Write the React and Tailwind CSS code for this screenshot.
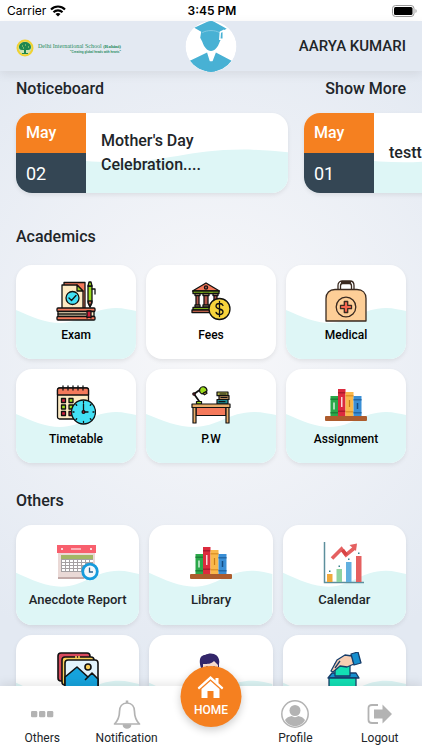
import React from 'react';

const Wave = () => (
  <svg
    className="absolute inset-0 w-full h-full"
    viewBox="0 0 120 94"
    preserveAspectRatio="none"
    aria-hidden="true"
  >
    <path d="M0 45C16 52 30 58 44 58C66 58 76 43 100 43C108 43 114 45 120 46V94H0Z" fill="#def6f6" />
  </svg>
);

const ExamIcon = () => (
  <svg viewBox="0 0 40 40" className="w-10 h-10" stroke="#111" strokeWidth="1.3" strokeLinejoin="round" strokeLinecap="round">
    <path d="M8 1.5h21v26H8z" fill="#f4795b" />
    <path d="M6 4h15l6 6v18H6z" fill="#fdeac3" />
    <path d="M21 4l6 6h-6z" fill="#9bcf2b" />
    <path d="M32 5h4v17l-2 4-2-4z" fill="#9bdc1c" />
    <path d="M32 5l1-4h2l1 4z" fill="#9bdc1c" />
    <path d="M36 8h3v5" fill="none" />
    <path d="M32 20h4l-2 6z" fill="#f4795b" />
    <circle cx="16.5" cy="17" r="6.500" fill="#42e0f5" />
    <path d="M13 17l2.500 2.500 4.500-5" fill="none" />
    <rect x="1" y="27" width="38" height="3.500" rx="1" fill="#f4795b" />
    <path d="M2 30.500h36v5H2z" fill="#fdeac3" />
    <rect x="1" y="35.500" width="38" height="3.500" rx="1" fill="#f4795b" />
    <path d="M2 33h28" />
    <path d="M31 30h4v7l-2-1-2 1z" fill="#d11f3d" />
  </svg>
);

const FeesIcon = () => (
  <svg viewBox="0 0 40 40" className="w-10 h-10" stroke="#111" strokeWidth="1.3" strokeLinejoin="round" strokeLinecap="round">
    <path d="M1.500 10L15 2l13.500 8z" fill="#f4795b" />
    <circle cx="15" cy="6.500" r="1.600" fill="#b5564a" />
    <path d="M2 10h26v2.500H2z" fill="#9bdc1c" />
    <path d="M5 14h3v12H5zM13 14h4v12h-4zM23 14h3v12h-3z" fill="#b5564a" />
    <path d="M4 12.500h5v2H4zM12 12.500h6v2h-6zM22 12.500h5v2h-5zM4 24h5v2H4zM12 24h6v2h-6z" fill="#fdd79a" />
    <path d="M2 26.500h20v2.500H2z" fill="#9bdc1c" />
    <path d="M1 29h22v2.500H1z" fill="#f4795b" />
    <circle cx="28.500" cy="28" r="10.500" fill="#f8d43c" />
    <path d="M32 24.500c-.6-1.600-2-2-3.500-2-2 0-3.500 1-3.500 2.700 0 3.800 7 1.800 7 5.600 0 1.800-1.500 2.700-3.500 2.700-1.800 0-3-.7-3.500-2.200M28.500 20.500v15" fill="none" />
  </svg>
);

const MedicalIcon = () => (
  <svg viewBox="0 0 42 42" className="w-[42px] h-[42px]" stroke="#3a2a20" strokeWidth="1.300" strokeLinejoin="round">
    <path d="M13 10V5.500C13 3 14.500 1 17 1h8c2.500 0 4 2 4 4.500V10h-2.500V6c0-1.500-.7-2.500-2-2.500h-7c-1.300 0-2 1-2 2.500v4z" fill="#fff" />
    <path d="M16 2.200h10" strokeWidth="2.500" />
    <path d="M1 41V18.500C1 13 4.500 9.500 10 9.500h22c5.500 0 9 3.500 9 9V41z" fill="#fdce97" />
    <circle cx="21" cy="27" r="9.800" fill="#fdce97" />
    <path d="M19.300 21.500h3.400v3.800h3.800v3.400h-3.800v3.800h-3.400v-3.800h-3.800v-3.400h3.800z" fill="#f4654f" />
  </svg>
);

const TimetableIcon = () => (
  <svg viewBox="0 0 40 40" className="w-10 h-10" stroke="#111" strokeWidth="1.3" strokeLinejoin="round" strokeLinecap="round">
    <rect x="1.500" y="3" width="31" height="31" rx="2" fill="#fdeac3" />
    <path d="M3.500 3h27a2 2 0 0 1 2 2v5h-31V5a2 2 0 0 1 2-2z" fill="#f4795b" />
    <path d="M7 1v4M12 1v4M17 1v4M22 1v4M27 1v4" />
    <path d="M5.500 13.500h4v4h-4zM5.500 26.500h4v4h-4z" fill="#d11f3d" />
    <path d="M13 13.500h4v4h-4zM5.500 20h4v4h-4zM13 20h4v4h-4z" fill="#9bdc1c" />
    <path d="M13 26.500h4v4h-4z" fill="#d11f3d" />
    <circle cx="27.500" cy="27" r="12" fill="#42e0f5" />
    <path d="M27.500 19v8H32M27.500 16.500v1M27.500 36.500v1M17 27h1M37 27h1M20 19.500l.7.7M35 34.500l-.7-.7M35 19.500l-.7.7M20 34.500l.7-.7" fill="none" />
    <circle cx="27.500" cy="27" r="1.400" fill="#d11f3d" />
  </svg>
);

const DeskIcon = () => (
  <svg viewBox="0 0 40 40" className="w-10 h-10" stroke="#111" strokeWidth="1.2" strokeLinejoin="round" strokeLinecap="round">
    <path d="M8 16L3 9l7-5" fill="none" strokeWidth="1.800" />
    <path d="M9 3.500c2-3 7-2 7 2.500l-5 3c-2-1-3-3-2-5.500z" fill="#9bdc1c" />
    <circle cx="3" cy="9" r="1.200" fill="#d11f3d" />
    <path d="M12 8.500l3-1.800 1 1.500-2.500 1.600z" fill="#f8d43c" />
    <path d="M5.500 16.500h5V19h-5z" fill="#9bdc1c" />
    <path d="M26 7h11v3.700H26z" fill="#a8a845" />
    <path d="M28 10.700h10v3.800H28z" fill="#b5875b" />
    <path d="M26 14.500h11V19H26z" fill="#1b8b93" />
    <path d="M29 9h6M30 12.500h6M28 16.700h6" />
    <path d="M5 22.500h30v8H5z" fill="#f4795b" />
    <path d="M2 22.500h3V38H2zM35 22.500h3V38h-3z" fill="#e8ad6a" />
    <path d="M1 19h38v3.500H1z" fill="#e8ad6a" />
  </svg>
);

const BooksIcon = () => (
  <svg viewBox="0 0 42 34" className="w-[42px] h-[34px]">
    <path d="M5.500 8H13v20H5.500z" fill="#2ba84a" />
    <path d="M5.500 10.500H13v1.500H5.500zM5.500 24H13v1.500H5.500z" fill="#1d8038" />
    <path d="M13 1h7.500v27H13z" fill="#dc2b3e" />
    <path d="M13 4h7.500v1.500H13zM13 22.500h7.500V24H13z" fill="#ab1b2e" />
    <path d="M20.500 4h8v24h-8z" fill="#f9b84b" />
    <path d="M20.500 7h8v1.500h-8zM20.500 23h8v1.500h-8z" fill="#e0952c" />
    <path d="M28.500 8h8v20h-8z" fill="#3a8fd6" />
    <path d="M28.500 11h8v1.500h-8zM28.500 24h8v1.500h-8z" fill="#2469a6" />
    <path d="M9 14.500v7M16.800 9v10" stroke="#fff" strokeWidth="1.200" />
    <path d="M24.500 12v7" stroke="#c97c19" strokeWidth="1.200" />
    <path d="M32.500 15v6" stroke="#154d82" strokeWidth="1.500" />
    <rect y="28" width="42" height="5" rx="1" fill="#ad5c2d" />
  </svg>
);

const ReportIcon = () => (
  <svg viewBox="0 0 42 38" className="w-[42px] h-[38px]">
    <path d="M1 9h37v26H1z" fill="#ead9d6" />
    <path d="M1 33h26v2H1z" fill="#c2aaa8" />
    <path d="M0 1h39v8H0z" fill="#f85f6d" />
    <path d="M14 5h10" stroke="#fff" strokeWidth="1.200" />
    <circle cx="5" cy="5" r="1" fill="#fff" />
    <circle cx="34" cy="5" r="1" fill="#fff" />
    <path d="M4 11h32v4H4z" fill="#a2b665" />
    <path d="M4 15h32v13H4z" fill="#a5a0a2" />
    <path d="M5 16h3v2H5zM9 16h3v2H9zM13 16h3v2h-3zM17 16h3v2h-3zM21 16h3v2h-3zM25 16h3v2h-3zM29 16h3v2h-3zM33 16h3v2h-3zM5 19h3v2H5zM9 19h3v2H9zM13 19h3v2h-3zM17 19h3v2h-3zM21 19h3v2h-3zM25 19h3v2h-3zM5 22h3v2H5zM9 22h3v2H9zM13 22h3v2h-3zM17 22h3v2h-3zM21 22h3v2h-3zM5 25h3v2H5zM9 25h3v2H9zM13 25h3v2h-3zM17 25h3v2h-3zM21 25h3v2h-3z" fill="#fff" />
    <circle cx="33" cy="27.500" r="7.300" fill="#f4f8fb" stroke="#169bdc" strokeWidth="2.800" />
    <path d="M32.500 23.500v4.500H36" stroke="#286490" strokeWidth="1.300" fill="none" />
  </svg>
);

const ChartIcon = () => (
  <svg viewBox="0 0 42 42" className="w-[42px] h-[42px]">
    <path d="M1.500 0v40.500H41" stroke="#5c8f9c" strokeWidth="1.500" fill="none" />
    <path d="M4 32h5.500v8H4z" fill="#f0a93b" />
    <path d="M13.500 27H19v13h-5.500z" fill="#8fd3a1" />
    <path d="M23 20h5.500v20H23z" fill="#62b0df" />
    <path d="M33 14h5.500v26H33z" fill="#e56060" />
    <path d="M6 28.500h1.500V30H6zM15.500 23.500H17V25h-1.500zM25 16.500h1.500V18H25zM35 10.500h1.500V12H35z" fill="#397f8d" />
    <path d="M9 16.500L18.500 7l4.500 6L32 5.500" stroke="#e56060" strokeWidth="3.600" fill="none" />
    <path d="M26.500 3L34 1.500 33 9z" fill="#e56060" />
    <path d="M18 9l4 5 3-2-4-5z" fill="#d84444" />
  </svg>
);

const GalleryIcon = () => (
  <svg viewBox="0 0 42 42" className="w-[42px] h-[42px]" stroke="#111" strokeWidth="1.600" strokeLinejoin="round">
    <rect x="1" y="1" width="32" height="28" rx="3" fill="#d8495c" />
    <rect x="5" y="5" width="32" height="28" rx="3" fill="#fbd05a" />
    <path d="M19 4v3M22 4v3" stroke="#fbd05a" />
    <rect x="8" y="8" width="33" height="32" rx="3" fill="#e2f3fc" />
    <path d="M8 25l12-10 11 10 4-4 6 6v10a3 3 0 0 1-3 3H11a3 3 0 0 1-3-3z" fill="#16a3dc" />
    <path d="M31 25l-3 3" />
    <circle cx="31" cy="15" r="3" fill="#fbd05a" />
  </svg>
);

const StudentIcon = () => (
  <svg viewBox="0 0 42 42" className="w-[42px] h-[42px]">
    <path d="M11 16C8 7 11 3 15 3c7-4 16 0 14 9v5z" fill="#33266a" />
    <path d="M13 12c5 0 8 0 11-3l4 4v5c0 10-15 10-15 0z" fill="#fbdfd3" />
    <path d="M17 14v2M24 14v2" stroke="#33266a" strokeWidth="1.200" />
    <path d="M6 42c0-10 6-14 15-14s15 4 15 14z" fill="#5a73d8" />
  </svg>
);

const VoteIcon = () => (
  <svg viewBox="0 0 42 42" className="w-[42px] h-[42px]" stroke="#173e6b" strokeWidth="1.300" strokeLinejoin="round">
    <path d="M9 21h24l3 5H5z" fill="#168fce" />
    <path d="M12 12h15v12H12z" fill="#13dfb4" />
    <path d="M8 19l6-11 8-5 7 1 2 8-7 3-7-1-7 6z" fill="#f8ceb2" />
    <path d="M17 9l-5 7" />
    <path d="M28 2l7-2 3 11-7 2z" fill="#168fce" />
    <path d="M6 26h27v16H6z" fill="#13dfb4" />
  </svg>
);

const SchoolCrest = () => (
  <svg viewBox="0 0 18 18" className="w-[18px] h-[18px] shrink-0">
    <circle cx="9" cy="9" r="8.500" fill="#f0d232" />
    <circle cx="9" cy="9" r="6.500" fill="#cfe3b4" />
    <path d="M9 3c3 0 6 2 6 5 0 2-1 3-3 3h-2v3h2v1H6v-1h2v-3H6C4 11 3 10 3 8c0-3 3-5 6-5z" fill="#1d874f" />
    <path d="M6 7h1M9 6h1M12 8h1M7 9h1" stroke="#c3e082" />
  </svg>
);

const Graduate = () => (
  <svg viewBox="0 0 52 52" className="w-full h-full">
    <circle cx="26" cy="26" r="26" fill="#fff" />
    <path d="M26-1L9 7l7 4-1 6 2 4c2 6 5 9.500 9 9.500s7-3.500 9-9.500l2-4-1-6 6-3z" fill="#48b1d4" />
    <path d="M17 12c5-3 13-3 18 0" stroke="#8fd0e5" strokeWidth=".8" fill="none" />
    <path d="M35.500 11.500l3-1.500v8.500h-3.500z" fill="#48b1d4" stroke="#fff" strokeWidth="1.500" />
    <path d="M4.500 40.500L22 32l4 13 5-13 16 8.500A26 26 0 0 1 4.500 40.500z" fill="#48b1d4" />
    <path d="M24 41h4l2 11h-8z" fill="#48b1d4" />
  </svg>
);

const NavDots = () => (
  <svg viewBox="0 0 24 24" className="w-6 h-6" fill="#b3b3b3">
    <rect x="1" y="9" width="6.300" height="6.300" rx="1.300" />
    <rect x="9" y="9" width="6.300" height="6.300" rx="1.300" />
    <rect x="17" y="9" width="6.300" height="6.300" rx="1.300" />
  </svg>
);

const NavBell = () => (
  <svg viewBox="0 0 28 30" className="w-7 h-[30px]" fill="none" stroke="#b3b3b3" strokeWidth="1.700" strokeLinejoin="round">
    <path d="M14 4c-5 0-7.500 4-7.500 8.500 0 6-1.500 9-5 12.500h25c-3.500-3.500-5-6.500-5-12.500 0-4.500-2.500-8.500-7.500-8.500z" />
    <path d="M14 1.500V4" strokeWidth="2.500" />
    <path d="M10.500 26a3.500 3 0 0 0 7 0z" fill="#b3b3b3" />
  </svg>
);

const NavProfile = () => (
  <svg viewBox="0 0 28 28" className="w-7 h-7">
    <circle cx="14" cy="14" r="13.200" fill="none" stroke="#b3b3b3" strokeWidth="1.500" />
    <circle cx="14" cy="10.500" r="5.500" fill="#b3b3b3" />
    <path d="M4 20c2-3 5-3.500 6.500-4 2 1.500 5 1.500 7 0 1.500.5 4.500 1 6.500 4-2 4-6 6-10 6s-8-2-10-6z" fill="#b3b3b3" />
  </svg>
);

const NavLogout = () => (
  <svg viewBox="0 0 26 22" className="w-[26px] h-[22px]">
    <path d="M11 2H5Q1.500 2 1.500 5v12q0 3 3.500 3h6" fill="none" stroke="#b3b3b3" strokeWidth="1.800" />
    <path d="M7 6.500h8.500V1.500L25 11l-9.500 9.500v-5H7z" fill="#b3b3b3" />
  </svg>
);

const HomeIcon = () => (
  <svg viewBox="0 0 26 22" className="w-[26px] h-[22px]" fill="#fff">
    <path d="M13 0l5 4.500V2h3v5.200l5 4.500-1.500 1.800L13 3.200 1.500 13.500 0 11.700z" />
    <path d="M13 5l9 8v9h-6v-7h-6v7H4v-9z" />
  </svg>
);

const notices = [
  { id: 1, month: 'May', day: '02', title: "Mother's Day Celebration...." },
  { id: 2, month: 'May', day: '01', title: 'testt' },
];

const academics = [
  { label: 'Exam', icon: ExamIcon, wave: true },
  { label: 'Fees', icon: FeesIcon, wave: false },
  { label: 'Medical', icon: MedicalIcon, wave: true },
  { label: 'Timetable', icon: TimetableIcon, wave: true },
  { label: 'P.W', icon: DeskIcon, wave: true },
  { label: 'Assignment', icon: BooksIcon, wave: true },
];

const others = [
  { name: 'Anecdote Report', label: 'Anecdote Report', icon: ReportIcon },
  { name: 'Library', label: 'Library', icon: BooksIcon },
  { name: 'Calendar', label: 'Calendar', icon: ChartIcon },
  { name: 'Gallery', icon: GalleryIcon },
  { name: 'Student', icon: StudentIcon },
  { name: 'Voting', icon: VoteIcon },
];

const StatusBar = () => (
  <div className="h-[21px] shrink-0 bg-white grid grid-cols-3 items-center pl-[7px] pr-[5px] text-black text-[12px] leading-4 font-['Inter',sans-serif]">
    <div className="flex items-center gap-1">
      <span>Carrier</span>
      <svg viewBox="0 0 16 12" className="w-4 h-3" fill="none" stroke="#000" strokeWidth="2.200">
        <path d="M1 4.500c4-4 10-4 14 0M3.500 7.200c2.500-2.500 6.500-2.500 9 0" />
        <path d="M8 11.500L5.500 9c1.400-1.300 3.600-1.300 5 0z" fill="#000" stroke="none" />
      </svg>
    </div>
    <span className="text-center font-semibold">3:45 PM</span>
    <svg viewBox="0 0 25 12" className="w-[25px] h-3 justify-self-end">
      <rect x=".5" y=".5" width="21.500" height="11" rx="3" fill="none" stroke="#999" />
      <rect x="2" y="2" width="18.500" height="8" rx="1.500" />
      <path d="M23.500 4v4c1.500-.8 1.500-3.200 0-4z" fill="#999" />
    </svg>
  </div>
);

const Header = () => (
  <header className="relative z-10 h-[50px] shrink-0 bg-[#e3e9f2] shadow-[0_3px_10px_rgba(0,0,0,0.08)] flex items-center justify-between px-4">
    <div className="flex items-center gap-1 pt-1">
      <SchoolCrest />
      <div className="flex flex-col text-[#1f8a5b] whitespace-nowrap">
        <span className="text-[6px] leading-[6px] font-['Liberation_Serif',serif]">
          Delhi International School <b className="text-[5px]">(Rohini)</b>
        </span>
        <span className="text-[3px] leading-[4px] font-bold self-end font-['Liberation_Sans',sans-serif]">
          "Creating global heads with hearts"
        </span>
      </div>
    </div>
    <button type="button" aria-label="Student profile" className="absolute left-1/2 -translate-x-1/2 top-0 w-[51px] h-[51px] rounded-full overflow-hidden">
      <Graduate />
    </button>
    <span className="text-[15px] leading-6 font-medium text-[#212529]">AARYA KUMARI</span>
  </header>
);

const NoticeCard = ({ notice }) => (
  <article className="relative w-[272px] h-20 shrink-0 flex rounded-2xl overflow-hidden bg-white shadow-[0_2px_4px_rgba(0,0,0,0.08)]">
    <Wave />
    <div className="relative w-[70px] shrink-0 flex flex-col text-white">
      <div className="flex-1 flex items-center px-[10px] bg-[#f58020] text-[16px] font-medium">{notice.month}</div>
      <div className="flex-1 flex items-center px-[10px] bg-[#344654] text-[18px]">{notice.day}</div>
    </div>
    <h3 className="relative flex-1 self-center pl-[15px] pr-10 text-[16px] leading-6 font-medium">{notice.title}</h3>
  </article>
);

const AcademicCard = ({ item }) => {
  const Icon = item.icon;
  return (
    <button
      type="button"
      className="relative h-[94px] rounded-2xl overflow-hidden bg-white shadow-[0_2px_4px_rgba(0,0,0,0.08)] flex flex-col items-center pt-[14px]"
    >
      {item.wave && <Wave />}
      <span className="relative h-11 flex items-center justify-center"><Icon /></span>
      <span className="relative mt-1 text-[12px] leading-4 font-medium text-black">{item.label}</span>
    </button>
  );
};

const OtherCard = ({ item }) => {
  const Icon = item.icon;
  return (
    <button
      type="button"
      aria-label={item.name}
      className="relative h-[100px] rounded-2xl overflow-hidden bg-white shadow-[0_2px_4px_rgba(0,0,0,0.08)] flex flex-col items-center pt-4"
    >
      <Wave />
      <span className="relative h-11 flex items-center justify-center"><Icon /></span>
      {item.label && (
        <span className="relative mt-[7px] text-[13px] leading-4 font-medium">{item.label}</span>
      )}
    </button>
  );
};

const NavItem = ({ label, icon: Icon }) => (
  <button type="button" className="flex flex-col items-center pt-[13px] text-[12px] leading-4 text-[#212529]">
    <span className="h-[30px] flex items-center"><Icon /></span>
    <span className="mt-px">{label}</span>
  </button>
);

const BottomNav = () => (
  <nav className="relative z-10 h-16 shrink-0 bg-white shadow-[0_-2px_10px_rgba(0,0,0,0.1)] grid grid-cols-5">
    <NavItem label="Others" icon={NavDots} />
    <NavItem label="Notification" icon={NavBell} />
    <div className="relative">
      <button
        type="button"
        className="absolute -top-5 left-1/2 -translate-x-1/2 w-[61px] h-[61px] rounded-full bg-[#f58020] text-white shadow-[0_3px_8px_rgba(0,0,0,0.2)] flex flex-col items-center pt-[10px] gap-1 text-[12px] leading-4 font-medium"
      >
        <HomeIcon />
        HOME
      </button>
    </div>
    <NavItem label="Profile" icon={NavProfile} />
    <NavItem label="Logout" icon={NavLogout} />
  </nav>
);

const App = () => {
  return (
    <div className="h-screen flex flex-col overflow-hidden font-['Roboto',sans-serif] text-[#212529] bg-[radial-gradient(circle_at_50%_45%,#f8f8fa_0%,#e3e9f2_75%)]">
      <StatusBar />
      <Header />
      <main className="flex-1 min-h-0 overflow-y-auto [scrollbar-width:none]">
        {/* Noticeboard */}
        <section>
          <div className="flex justify-between px-4 pt-[6px] text-[16px] leading-6 font-medium">
            <h2>Noticeboard</h2>
            <button type="button">Show More</button>
          </div>
          <div className="flex gap-4 px-4 pt-3 pb-2 overflow-x-auto [scrollbar-width:none]">
            {notices.map((notice) => (
              <NoticeCard key={notice.id} notice={notice} />
            ))}
          </div>
        </section>

        {/* Academics */}
        <section className="px-4 pt-6">
          <h2 className="text-[16px] leading-6 font-medium">Academics</h2>
          <div className="mt-4 grid grid-cols-[12fr_13fr_12fr] gap-[10px]">
            {academics.map((item) => (
              <AcademicCard key={item.label} item={item} />
            ))}
          </div>
        </section>

        {/* Others */}
        <section className="px-4 pt-[26px] pb-8">
          <h2 className="text-[16px] leading-6 font-medium">Others</h2>
          <div className="mt-3 grid grid-cols-3 gap-[10px]">
            {others.map((item) => (
              <OtherCard key={item.name} item={item} />
            ))}
          </div>
        </section>
      </main>
      <BottomNav />
    </div>
  );
};

export default App;
